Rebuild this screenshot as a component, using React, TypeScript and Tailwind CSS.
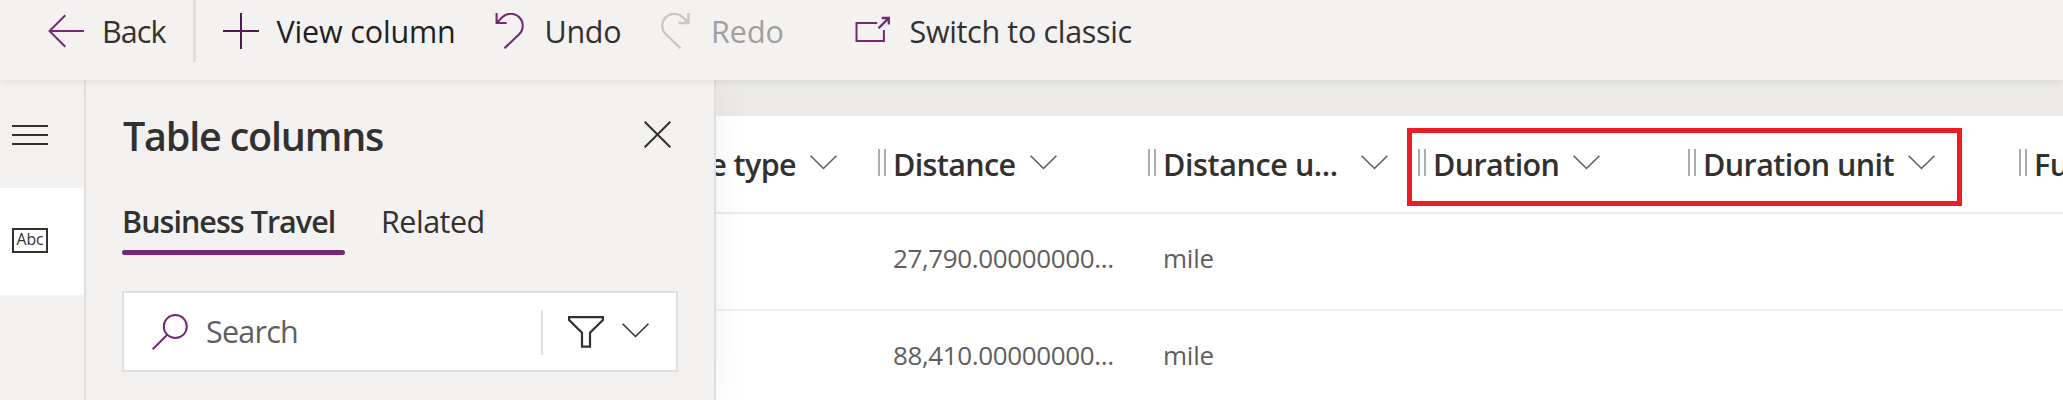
import type { ReactNode } from "react";

function Chevron({ className = "" }: { className?: string }) {
  return (
    <svg className={`h-[15px] w-[27px] shrink-0 ${className}`} viewBox="0 0 27 15" fill="none" stroke="currentColor" strokeWidth="1.6">
      <path d="M0.6 0.8 L13.5 13.5 L26.4 0.8" />
    </svg>
  );
}

function BackIcon() {
  return (
    <svg className="h-9 w-9" viewBox="0 0 36 36" fill="none" stroke="#742774" strokeWidth="2">
      <path d="M36 18H1.5M17.3 2.3L1.5 18L17.3 33.7" />
    </svg>
  );
}

function PlusIcon() {
  return (
    <svg className="h-9 w-9" viewBox="0 0 36 36" fill="none" stroke="#4f1a52" strokeWidth="2">
      <path d="M0 18H36M18 0V36" />
    </svg>
  );
}

function UndoIcon({ className = "" }: { className?: string }) {
  return (
    <svg className={`h-9 w-9 ${className}`} viewBox="0 0 36 36" fill="none" stroke="currentColor" strokeWidth="2.1">
      <path d="M5.6 0V10H15.6M5.6 10L11.2 4.3A12 12 0 0 1 28.2 21.3L13.4 35.3" />
    </svg>
  );
}

function RedoIcon({ className = "" }: { className?: string }) {
  return (
    <svg className={`h-9 w-9 ${className}`} viewBox="0 0 36 36" fill="none" stroke="currentColor" strokeWidth="2.3">
      <path d="M32.4 0V10H22.4M32.4 10L26.8 4.3A12 12 0 0 0 9.8 21.3L24.6 35.3" />
    </svg>
  );
}

function PopOutIcon() {
  return (
    <svg className="h-9 w-9" viewBox="0 0 36 36" fill="none" stroke="#742774" strokeWidth="2">
      <path d="M22.2 10H1.5V28H28.9V17" />
      <path d="M23.5 15.3L33.5 5.3M26.8 5H33.8V11.5" strokeWidth="2.3" />
    </svg>
  );
}

function Command({ icon, label, className, textClass }: { icon: ReactNode; label: string; className: string; textClass: string }) {
  return (
    <button className={`flex h-full shrink-0 items-center gap-[18px] ${className}`}>
      <span className="w-9 shrink-0">{icon}</span>
      <span className={`whitespace-nowrap ${textClass}`}>{label}</span>
    </button>
  );
}

function Grip() {
  return (
    <span className="mb-[3px] flex h-[27px] w-[8px] shrink-0 justify-between">
      <span className="w-[2px] bg-[#adacab]" />
      <span className="w-[2px] bg-[#adacab]" />
    </span>
  );
}

function HeaderCell({ label, className, labelClass }: { label: string; className: string; labelClass: string }) {
  return (
    <div className={`flex h-full shrink-0 items-center ${className}`}>
      <Grip />
      <span className={`ml-[7px] mr-[15px] shrink-0 whitespace-nowrap font-semibold ${labelClass}`}>{label}</span>
      <Chevron className="mb-1 text-[#605e5c]" />
    </div>
  );
}

function Row({ value, unit }: { value: string; unit: string }) {
  return (
    <div className="flex h-[97px] shrink-0 items-center border-b-2 border-[#f0f0f0] pb-[7px] text-[26px] text-[#605e5c]">
      <span className="ml-[177px] w-[270px] whitespace-nowrap tracking-[-0.37px]">{value}</span>
      <span className="tracking-[-0.2px]">{unit}</span>
    </div>
  );
}

export default function App() {
  return (
    <div className="flex h-[400px] w-[2063px] flex-col overflow-hidden bg-[#f3f2f1] font-['Open_Sans','Noto_Sans',sans-serif] text-[30.5px] leading-[42px] text-[#323130]">
      <header className="relative z-20 h-20 shrink-0 bg-[#f3f2f1] shadow-[0_1px_9px_rgba(0,0,0,0.09)]">
        <div className="flex h-[62px] items-center">
          <Command icon={<BackIcon />} label="Back" className="ml-[48px] w-[145px]" textClass="tracking-[-0.9px]" />
          <span className="mr-[26.5px] h-full w-[3px] bg-[#e1dfdd]" />
          <Command icon={<PlusIcon />} label="View column" className="w-[268px]" textClass="tracking-[-0.16px] text-[#201f1e]" />
          <Command icon={<UndoIcon className="text-[#742774]" />} label="Undo" className="w-[165.5px]" textClass="tracking-[-0.3px]" />
          <Command icon={<RedoIcon className="text-[#c8c6c4]" />} label="Redo" className="w-[198.5px]" textClass="ml-px text-[#a19f9d]" />
          <Command icon={<PopOutIcon />} label="Switch to classic" className="" textClass="ml-px tracking-[-0.33px]" />
        </div>
      </header>

      <div className="flex min-h-0 flex-1">
        <nav className="relative z-[11] flex w-[86px] shrink-0 flex-col border-r-2 border-[#e1dfdd] bg-[#f3f2f1]">
          <button className="flex h-[108px] items-center pl-3 pt-[2px]">
            <span className="flex h-5 w-9 flex-col justify-between">
              <span className="h-[2px] bg-[#323130]" />
              <span className="h-[2px] bg-[#323130]" />
              <span className="h-[2px] bg-[#323130]" />
            </span>
          </button>
          <button className="flex h-[107px] items-center rounded-r bg-white pl-3">
            <span className="mt-[-3px] flex h-[25px] w-9 items-center justify-center border-2 border-[#323130] text-[15.75px] leading-none">
              Abc
            </span>
          </button>
        </nav>

        <aside className="relative z-10 flex w-[630px] shrink-0 flex-col border-r-2 border-[#e1dfdd] bg-[#f3f2f1] px-9 shadow-[0_0_38px_rgba(0,0,0,0.06)]">
          <div className="mt-[29px] flex h-[54px] items-center justify-between">
            <h2 className="ml-px text-[39.5px] leading-[54px] font-semibold tracking-[-1.2px]">Table columns</h2>
            <svg className="mb-[3px] mr-[7px] h-[27px] w-[27px]" viewBox="0 0 27 27" fill="none" stroke="#323130" strokeWidth="2">
              <path d="M0.7 0.7L26.3 26.3M26.3 0.7L0.7 26.3" />
            </svg>
          </div>
          <div className="mt-[37px] flex gap-[36px]">
            <div className="w-[223px]">
              <div className="whitespace-nowrap font-semibold tracking-[-0.97px]">Business Travel</div>
              <div className="mt-[8px] h-[5px] rounded-full bg-[#742774]" />
            </div>
            <div className="tracking-[-0.5px]">Related</div>
          </div>
          <div className="mt-[36px] flex h-[81px] w-[556px] items-center border-2 border-[#e1dfdd] bg-white pl-[28px]">
            <svg className="h-9 w-9" viewBox="0 0 36 36" fill="none" stroke="#742774" strokeWidth="2">
              <circle cx="23.3" cy="12.5" r="11.5" />
              <path d="M15.2 20.7L0.7 35.2" />
            </svg>
            <span className="mb-[2px] ml-[18px] w-[335px] tracking-[-0.75px] text-[#605e5c]">Search</span>
            <span className="mt-[2px] h-[45px] w-[2px] bg-[#e1dfdd]" />
            <svg className="ml-[25px] h-[32px] w-9" viewBox="0 0 36 32" fill="none" stroke="#323130" strokeWidth="2.2">
              <path d="M1.1 1.1H34.9V4L22 16.8V30.6H14V16.8L1.1 4Z" />
            </svg>
            <Chevron className="mb-[2px] ml-[18px] text-[#323130]" />
          </div>
        </aside>

        <main className="flex min-w-0 flex-1 flex-col bg-white">
          <div className="h-9 shrink-0 bg-[#ebeae8]" />
          <div className="relative flex h-[98px] shrink-0 items-center border-b-2 border-[#eaeaea]">
            <div className="flex h-full w-[162px] shrink-0 items-center">
              <span className="flex w-[80px] justify-end overflow-hidden">
                <span className="whitespace-nowrap font-semibold tracking-[-0.6px]">Vehicle type</span>
              </span>
              <Chevron className="mb-1 ml-[14px] text-[#605e5c]" />
            </div>
            <HeaderCell label="Distance" className="w-[270px]" labelClass="w-[122px] tracking-[-0.64px]" />
            <HeaderCell label="Distance u..." className="w-[270px]" labelClass="w-[183px] tracking-[-0.4px]" />
            <HeaderCell label="Duration" className="w-[270px]" labelClass="w-[125px] tracking-[-0.6px]" />
            <HeaderCell label="Duration unit" className="w-[331px]" labelClass="w-[190px] tracking-[-0.57px]" />
            <HeaderCell label="Fuel type" className="w-[270px]" labelClass="w-[125px] tracking-[-0.6px]" />
            <div className="absolute left-[691px] top-[12px] h-[78px] w-[555px] border-[5px] border-[#ee1c23]" />
          </div>
          <Row value="27,790.00000000..." unit="mile" />
          <Row value="88,410.00000000..." unit="mile" />
        </main>
      </div>
    </div>
  );
}
